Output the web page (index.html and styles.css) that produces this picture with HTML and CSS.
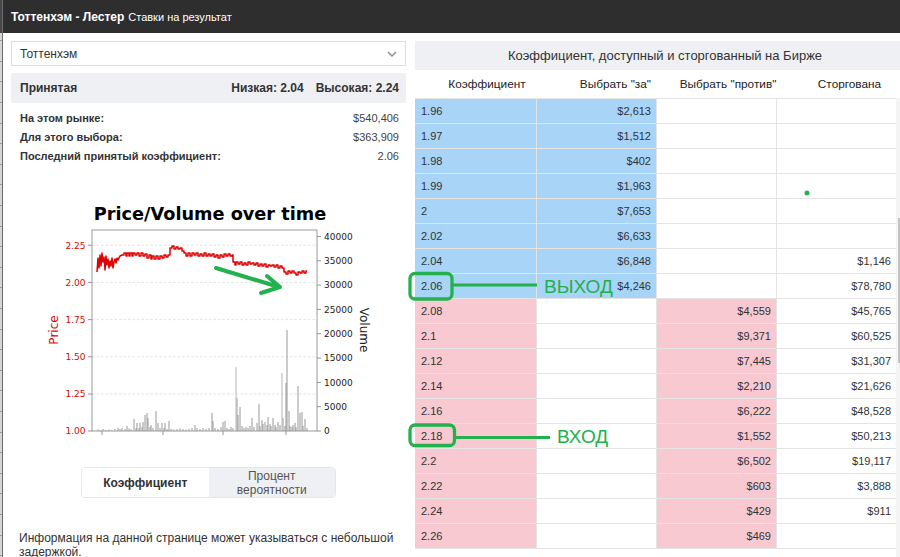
FILE: index.html
```html
<!DOCTYPE html>
<html lang="ru">
<head>
<meta charset="utf-8">
<title>Тоттенхэм - Лестер</title>
<link rel="stylesheet" href="styles.css">
</head>
<body>
<div class="page">
  <div class="edge"></div>
  <div class="dialog">
    <header class="topbar"><span class="match">Тоттенхэм - Лестер</span><span class="market">Ставки на результат</span></header>
    <div class="content">
      <section class="left">
        <div class="select"><span>Тоттенхэм</span><svg class="chev" viewBox="0 0 10 6"><path d="M1 1L5 5L9 1" fill="none" stroke="#8a8a8a" stroke-width="1.4"/></svg></div>
        <div class="traded"><span>Принятая</span><span class="range"><span>Низкая: 2.04</span><span>Высокая: 2.24</span></span></div>
        <div class="stats">
          <div class="stat"><span class="lbl">На этом рынке:</span><span class="val">$540,406</span></div>
          <div class="stat"><span class="lbl">Для этого выбора:</span><span class="val">$363,909</span></div>
          <div class="stat"><span class="lbl">Последний принятый коэффициент:</span><span class="val">2.06</span></div>
        </div>
        <svg class="chart" viewBox="11 195 395 265">
          <text x="210" y="220" class="ctitle" text-anchor="middle">Price/Volume over time</text>
          <g stroke="#dadada" stroke-width="0.8" stroke-dasharray="2.5,2">
            <line x1="92" x2="317" y1="245.2" y2="245.2"/>
            <line x1="92" x2="317" y1="282.4" y2="282.4"/>
            <line x1="92" x2="317" y1="319.6" y2="319.6"/>
            <line x1="92" x2="317" y1="356.8" y2="356.8"/>
            <line x1="92" x2="317" y1="394" y2="394"/>
          </g>
          <path fill="none" stroke="#8c8c8c" stroke-width="0.9" d="M98 431V429.5M100 431V430M103 431V429M106 431V430M109 431V429.5M112 431V430M115 431V429M118 431V427.7M120 431V429M122 431V428M125 431V429M127 431V426M129 431V428.5M131 431V429M134 431V419M136 431V428M137 431V423M139 431V428M140 431V423M142 431V427M143 431V422M145 431V415M147 431V413M148 431V418M150 431V427M151 431V425M153 431V428M156 431V411M158 431V423M160 431V428M162 431V423M164 431V428M165 431V423M167 431V429M169 431V421M171 431V429M174 431V429.5M177 431V429M180 431V428.5M183 431V429M186 431V429.5M189 431V429M192 431V428M195 431V425M197 431V428M200 431V429M203 431V428M206 431V429M209 431V428M212 431V413M213 431V421M215 431V428M218 431V429M221 431V427M223 431V422M225 431V421M227 431V428M229 431V429M231 431V427M233 431V428M237 431V398M238 431V415M240 431V407M242 431V426M244 431V428M246 431V427M248 431V428M250 431V426M252 431V418M254 431V427M257 431V423M259 431V404M260 431V426M262 431V420M263 431V424M265 431V422M267 431V425M268 431V417M270 431V424M271 431V426M273 431V418M275 431V425M276 431V427M278 431V422M280 431V425M283 431V418M285 431V426M286 431V383M287 431V330M289 431V411M290 431V426M292 431V427M293 431V425M295 431V423M296 431V427M298 431V386M300 431V413M302 431V412M303 431V426M305 431V419M307 431V428"/>
          <path fill="none" stroke="#b5b5b5" stroke-width="1" d="M236 431V367M282 431V373"/>
          <path fill="none" stroke="#e00000" stroke-width="1.5" stroke-linejoin="round" d="M97 272L98 258L99 268L100 255L101 266L102 253L103 262L104 257L105 270L106 256L107 265L108 259L109 268L110 261L111 266L112 258L113 268L114 262L115 259L116 263L117 258L118 260L120 256L122 255L124 255L124 253L126 253L126 256L127 256L127 253L129 253L129 256L130 256L130 253L132 253L132 256L133 256L133 253L135 253L135 255L137 255L137 253L139 253L139 256L141 256L141 253L143 253L143 256L145 256L145 254L147 254L147 258L149 258L149 255L151 255L151 259L152 259L152 256L154 256L154 259L156 259L156 256L158 256L158 259L160 259L160 256L162 256L162 258L164 258L164 255L166 255L166 257L168 257L168 255L170 255L170 248L172 248L172 246L174 246L174 249L176 249L176 247L178 247L178 249L180 249L180 248L182 248L182 251L184 251L184 253L186 253L186 256L188 256L188 253L190 253L190 256L192 256L192 253L194 253L194 255L196 255L196 253L198 253L198 256L200 256L200 254L202 254L202 256L204 256L204 253L206 253L206 256L208 256L208 254L210 254L210 256L212 256L212 254L214 254L214 257L216 257L216 255L218 255L218 258L220 258L220 255L222 255L222 257L224 257L224 254L226 254L226 256L228 256L228 254L230 254L230 256L232 256L232 255L233 255L233 262L235 262L235 265L236 265L236 262L238 262L238 264L240 264L240 262L242 262L242 265L244 265L244 263L246 263L246 265L248 265L248 262L250 262L250 264L252 264L252 263L254 263L254 265L256 265L256 263L258 263L258 266L260 266L260 264L262 264L262 266L264 266L264 264L266 264L266 267L268 267L268 265L270 265L270 266L272 266L272 265L274 265L274 267L276 267L276 265L278 265L278 268L280 268L280 266L282 266L282 268L284 268L284 272L286 272L286 274L288 274L288 271L290 271L290 273L292 273L292 271L294 271L294 273L296 273L296 275L298 275L298 272L300 272L300 273L302 273L302 271L304 271L304 273L306 273L306 271L307 271"/>
          <rect x="92" y="230" width="225" height="201" fill="none" stroke="#9a9a9a" stroke-width="1"/>
          <g stroke="#8a8a8a" stroke-width="0.9">
            <path d="M88 245.2H92M88 282.4H92M88 319.6H92M88 356.8H92M88 394H92M88 431H92"/>
            <path d="M317 236.5H321M317 260.8H321M317 285.1H321M317 309.4H321M317 333.7H321M317 358.1H321M317 382.4H321M317 406.7H321M317 431H321"/>
            <path d="M102 431V435M163 431V435M223 431V435M286 431V435"/>
          </g>
          <g class="tk red" text-anchor="end">
            <text x="85.5" y="248.5">2.25</text>
            <text x="85.5" y="285.7">2.00</text>
            <text x="85.5" y="322.9">1.75</text>
            <text x="85.5" y="360.1">1.50</text>
            <text x="85.5" y="397.3">1.25</text>
            <text x="85.5" y="434.3">1.00</text>
          </g>
          <g class="tk">
            <text x="324" y="239.8">40000</text>
            <text x="324" y="264.1">35000</text>
            <text x="324" y="288.4">30000</text>
            <text x="324" y="312.7">25000</text>
            <text x="324" y="337">20000</text>
            <text x="324" y="361.4">15000</text>
            <text x="324" y="385.7">10000</text>
            <text x="324" y="410">5000</text>
            <text x="324" y="434.3">0</text>
          </g>
          <text class="axl red" transform="translate(58 330) rotate(-90)" text-anchor="middle">Price</text>
          <text class="axl" transform="translate(360 330) rotate(90)" text-anchor="middle">Volume</text>
          <g fill="none" stroke="#22b14c" stroke-width="4" stroke-linecap="round" stroke-linejoin="round">
            <path d="M216 268L279 287"/>
            <path d="M267 276L280 287L261 293"/>
          </g>
        </svg>
        <div class="toggle"><button class="opt active">Коэффициент</button><button class="opt">Процент<br>вероятности</button></div>
        <p class="note">Информация на данной странице может указываться с небольшой задержкой.</p>
      </section>
      <section class="right">
        <div class="rtitle">Коэффициент, доступный и сторгованный на Бирже</div>
        <div class="cols">
          <div class="h1">Коэффициент</div>
          <div class="h2">Выбрать "за"</div>
          <div class="h3">Выбрать "против"</div>
          <div class="h4">Сторгована</div>
        </div>
        <div class="rbody">
          <div class="tbl">
            <div class="cell o b">1.96</div><div class="cell b">$2,613</div><div class="cell"></div><div class="cell"></div>
            <div class="cell o b">1.97</div><div class="cell b">$1,512</div><div class="cell"></div><div class="cell"></div>
            <div class="cell o b">1.98</div><div class="cell b">$402</div><div class="cell"></div><div class="cell"></div>
            <div class="cell o b">1.99</div><div class="cell b">$1,963</div><div class="cell"></div><div class="cell"></div>
            <div class="cell o b">2</div><div class="cell b">$7,653</div><div class="cell"></div><div class="cell"></div>
            <div class="cell o b">2.02</div><div class="cell b">$6,633</div><div class="cell"></div><div class="cell"></div>
            <div class="cell o b">2.04</div><div class="cell b">$6,848</div><div class="cell"></div><div class="cell">$1,146</div>
            <div class="cell o b">2.06</div><div class="cell b">$4,246</div><div class="cell"></div><div class="cell">$78,780</div>
            <div class="cell o p">2.08</div><div class="cell"></div><div class="cell p">$4,559</div><div class="cell">$45,765</div>
            <div class="cell o p">2.1</div><div class="cell"></div><div class="cell p">$9,371</div><div class="cell">$60,525</div>
            <div class="cell o p">2.12</div><div class="cell"></div><div class="cell p">$7,445</div><div class="cell">$31,307</div>
            <div class="cell o p">2.14</div><div class="cell"></div><div class="cell p">$2,210</div><div class="cell">$21,626</div>
            <div class="cell o p">2.16</div><div class="cell"></div><div class="cell p">$6,222</div><div class="cell">$48,528</div>
            <div class="cell o p">2.18</div><div class="cell"></div><div class="cell p">$1,552</div><div class="cell">$50,213</div>
            <div class="cell o p">2.2</div><div class="cell"></div><div class="cell p">$6,502</div><div class="cell">$19,117</div>
            <div class="cell o p">2.22</div><div class="cell"></div><div class="cell p">$603</div><div class="cell">$3,888</div>
            <div class="cell o p">2.24</div><div class="cell"></div><div class="cell p">$429</div><div class="cell">$911</div>
            <div class="cell o p">2.26</div><div class="cell"></div><div class="cell p">$469</div><div class="cell"></div>
          </div>
          <div class="scroll"><div class="thumb"></div></div>
        </div>
      </section>
    </div>
  </div>
  <svg class="annot" viewBox="0 0 900 557">
    <g fill="none" stroke="#22b14c" stroke-width="3.3" stroke-linejoin="round">
      <rect x="410" y="273.5" width="42" height="25.5" rx="5"/>
      <rect x="410" y="425" width="44.5" height="20.5" rx="5"/>
      <path d="M453 285H537" stroke-width="3"/>
      <path d="M456 437.5H550" stroke-width="3"/>
    </g>
    <circle cx="807" cy="193" r="2.5" fill="#22b14c"/>
    <text x="544" y="293" class="mark">ВЫХОД</text>
    <text x="557" y="443" class="mark">ВХОД</text>
  </svg>
</div>
</body>
</html>
```
FILE: styles.css
```css
* { box-sizing: border-box; margin: 0; padding: 0; }
html, body { width: 900px; height: 557px; overflow: hidden; }
body { font-family: "Liberation Sans", Arial, sans-serif; color: #333; background: #fff; }

.page { position: relative; display: flex; width: 900px; height: 557px; }
.edge {
  width: 3px; flex: none; border-right: 1px solid #6b6b6b;
  background:
    linear-gradient(#474747 0 33px, transparent 33px),
    repeating-linear-gradient(to bottom, #d6d6d6 0 19.6px, #9c9c9c 19.6px 20.6px);
}
.dialog { flex: 1; display: flex; flex-direction: column; min-width: 0; }

.topbar { height: 33px; flex: none; background: #2e2e2e; color: #fff; display: flex; align-items: center; padding-left: 8px; gap: 4px; }
.match { font-weight: bold; font-size: 12px; }
.market { font-size: 11px; }

.content { flex: 1; display: flex; }

.left { width: 412px; flex: none; padding: 8px 9px 0 8px; }
.select { height: 25px; border: 1px solid #dcdcdc; display: flex; align-items: center; justify-content: space-between; padding: 0 8px; font-size: 12px; color: #333; }
.chev { width: 10px; height: 6px; }
.traded { margin-top: 7px; height: 30px; background: #eef0f3; display: flex; justify-content: space-between; align-items: center; padding: 0 7px 0 9px; font-size: 12px; font-weight: bold; color: #333; }
.range { display: flex; gap: 12px; }
.stats { padding: 6px 7px 0 9px; font-size: 11px; }
.stat { display: flex; justify-content: space-between; line-height: 19px; }
.lbl { font-weight: bold; color: #333; }
.val { color: #444; }

.chart { display: block; margin-top: 29px; width: 395px; height: 265px; }
.ctitle { font-family: "DejaVu Sans", sans-serif; font-weight: bold; font-size: 17.7px; fill: #000; }
.tk { font-family: "DejaVu Sans", sans-serif; font-size: 9px; fill: #222; }
.axl { font-family: "DejaVu Sans", sans-serif; font-size: 12px; fill: #222; }
.red { fill: #d10a0a; }

.toggle { margin: 7px auto 0; width: 255px; height: 31px; display: flex; border: 1px solid #e6e6e6; border-radius: 4px; overflow: hidden; }
.opt { flex: 1; border: 0; font-family: inherit; font-size: 12px; line-height: 14px; background: #eef0f3; color: #555; }
.opt.active { background: #fff; color: #333; font-weight: bold; }
.note { margin-top: 33px; padding: 0 8px; font-size: 12px; line-height: 14px; color: #333; }

.right { width: 485px; flex: none; padding-top: 8px; display: flex; flex-direction: column; }
.rtitle { height: 29px; flex: none; background: #eef0f3; display: flex; align-items: center; justify-content: center; padding-left: 15px; font-size: 13px; color: #333; }
.cols { height: 28px; flex: none; display: grid; grid-template-columns: 122px 120px 120px 119px; align-items: center; font-size: 11.8px; color: #222; white-space: nowrap; }
.h1 { text-align: center; padding-left: 22px; }
.h2 { text-align: right; padding-right: 6px; }
.h3 { text-align: center; padding-left: 22px; }
.h4 { text-align: center; padding-left: 26px; }

.rbody { flex: 1; display: flex; }
.tbl { align-self: flex-start; width: 481px; display: grid; grid-template-columns: 121px 119px 119px 119px; grid-auto-rows: 24px; gap: 1px; padding: 1px 0; background: #e4e4e4; }
.cell { background: #fff; font-size: 11px; line-height: 24px; padding: 0 5px; text-align: right; color: #333; }
.cell.o { text-align: left; padding-left: 6px; }
.cell.b { background: #a8d4f8; }
.cell.p { background: #f8c9d1; }
.scroll { width: 4px; background: #f4f4f4; padding-top: 120px; }
.thumb { width: 2px; height: 145px; margin-left: 2px; background: #c2c2c2; }

.annot { position: absolute; left: 0; top: 0; width: 900px; height: 557px; pointer-events: none; }
.mark { font-family: "Liberation Sans", Arial, sans-serif; font-size: 19px; fill: #22b14c; }
```
